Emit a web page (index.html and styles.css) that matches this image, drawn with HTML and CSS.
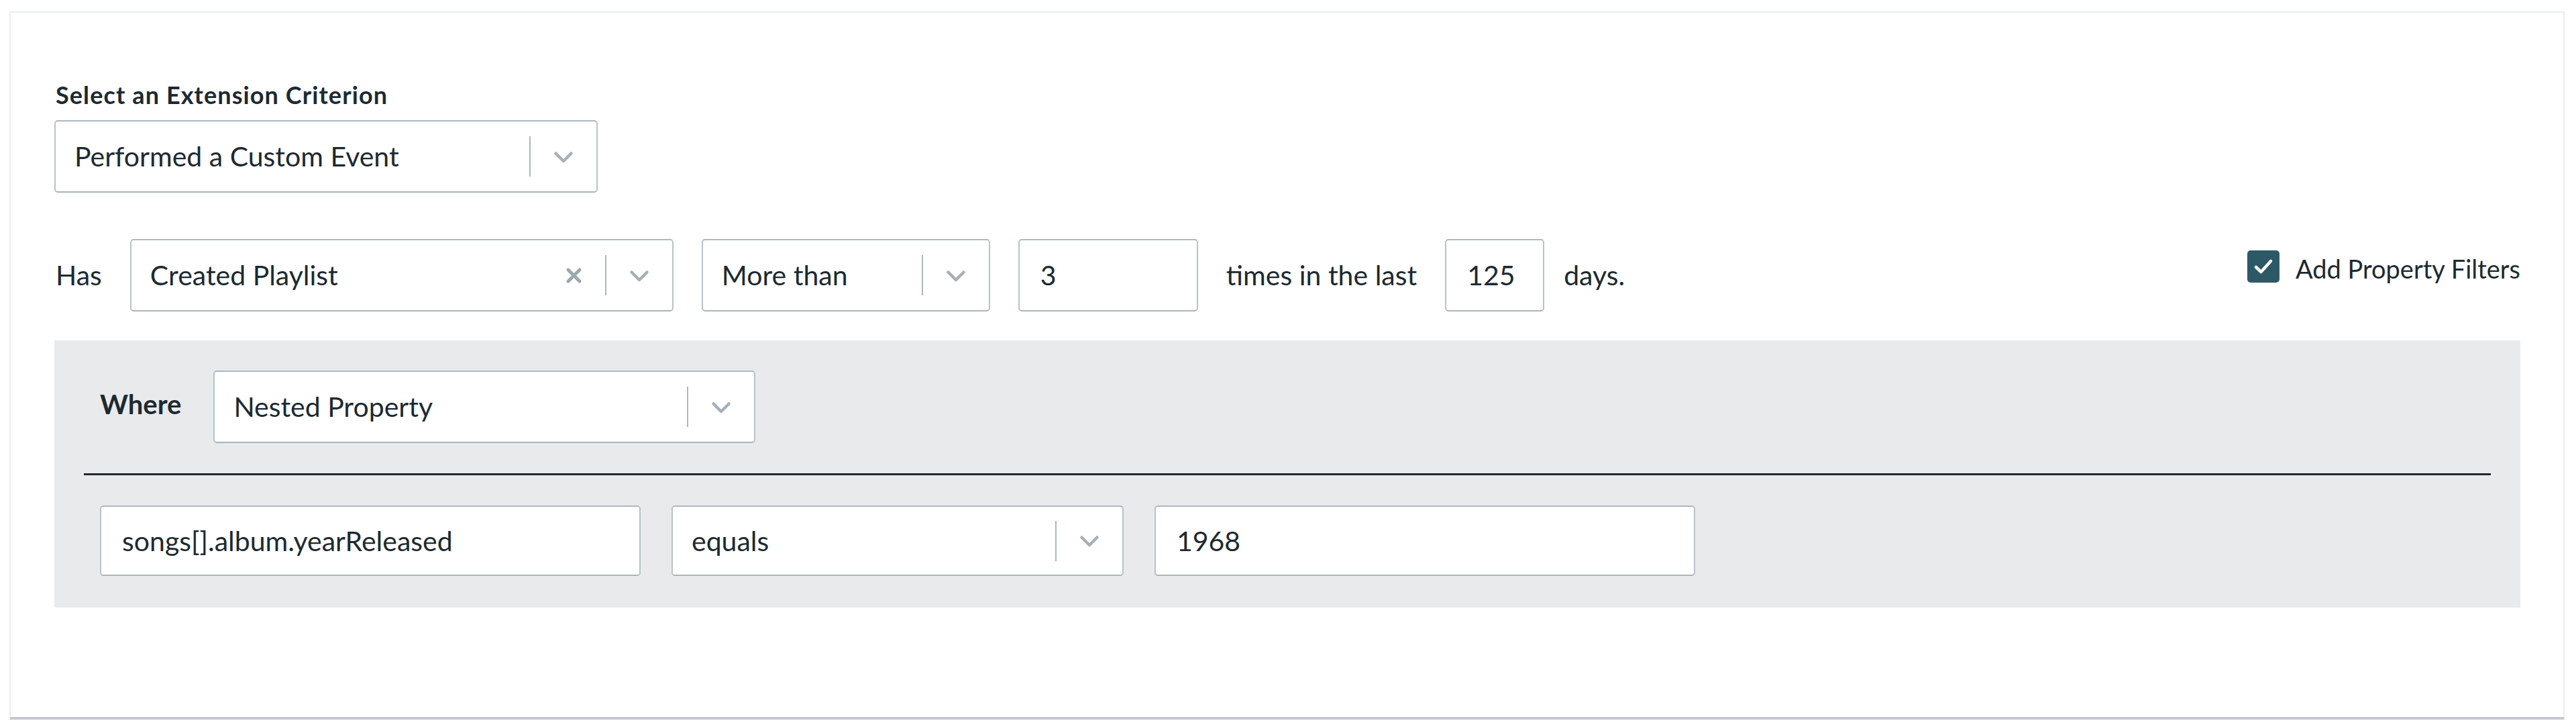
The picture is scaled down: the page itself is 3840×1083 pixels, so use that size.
FILE: index.html
```html
<!DOCTYPE html>
<html lang="en">
<head>
<meta charset="utf-8">
<title>Extension Criterion</title>
<link rel="stylesheet" href="styles.css">
</head>
<body>
<div class="card">
  <div class="field-label">Select an Extension Criterion</div>
  <div class="select w-criterion">
    <div class="select-value">Performed a Custom Event</div>
    <span class="sep"></span>
    <span class="chev"><svg width="30" height="19" viewBox="0 0 30 19"><path d="M3.5 3.5 L15 15 L26.5 3.5" fill="none" stroke="#a6b0b7" stroke-width="4.5" stroke-linecap="round" stroke-linejoin="round"/></svg></span>
  </div>

  <div class="row">
    <span class="txt">Has</span>
    <div class="select w-event">
      <div class="select-value">Created Playlist</div>
      <span class="clear"><svg width="25" height="25" viewBox="0 0 25 25"><path d="M4 4 L21 21 M21 4 L4 21" fill="none" stroke="#9ca7ae" stroke-width="5" stroke-linecap="round"/></svg></span>
      <span class="sep"></span>
      <span class="chev"><svg width="30" height="19" viewBox="0 0 30 19"><path d="M3.5 3.5 L15 15 L26.5 3.5" fill="none" stroke="#a6b0b7" stroke-width="4.5" stroke-linecap="round" stroke-linejoin="round"/></svg></span>
    </div>
    <div class="select w-compare">
      <div class="select-value">More than</div>
      <span class="sep"></span>
      <span class="chev"><svg width="30" height="19" viewBox="0 0 30 19"><path d="M3.5 3.5 L15 15 L26.5 3.5" fill="none" stroke="#a6b0b7" stroke-width="4.5" stroke-linecap="round" stroke-linejoin="round"/></svg></span>
    </div>
    <div class="input w-count">3</div>
    <span class="txt">times in the last</span>
    <div class="input w-days">125</div>
    <span class="txt days">days.</span>
    <label class="check">
      <span class="box"><svg width="30" height="26" viewBox="0 0 30 26"><path d="M4 14 L11.5 21 L26 5" fill="none" stroke="#ffffff" stroke-width="4.5" stroke-linecap="round" stroke-linejoin="round"/></svg></span>
      <span class="check-label">Add Property Filters</span>
    </label>
  </div>

  <div class="panel">
    <div class="where-row">
      <span class="where">Where</span>
      <div class="select w-nested">
        <div class="select-value">Nested Property</div>
        <span class="sep"></span>
        <span class="chev"><svg width="30" height="19" viewBox="0 0 30 19"><path d="M3.5 3.5 L15 15 L26.5 3.5" fill="none" stroke="#a6b0b7" stroke-width="4.5" stroke-linecap="round" stroke-linejoin="round"/></svg></span>
      </div>
    </div>
    <div class="rule"></div>
    <div class="filter-row">
      <div class="input w-path">songs[].album.yearReleased</div>
      <div class="select w-op">
        <div class="select-value">equals</div>
        <span class="sep"></span>
        <span class="chev"><svg width="30" height="19" viewBox="0 0 30 19"><path d="M3.5 3.5 L15 15 L26.5 3.5" fill="none" stroke="#a6b0b7" stroke-width="4.5" stroke-linecap="round" stroke-linejoin="round"/></svg></span>
      </div>
      <div class="input w-value">1968</div>
    </div>
  </div>
</div>
</body>
</html>
```

FILE: styles.css
```css
html, body {
  margin: 0;
  padding: 0;
  background: #ffffff;
}

body {
  font-family: Lato, "Liberation Sans", sans-serif;
  color: #1d2a30;
}

.card {
  margin: 17px 17px 0 14px;
  border: 2px solid #eaecee;
  border-bottom: 4px solid #c3c9ce;
  padding: 102px 64px 163px 65px;
  background: #ffffff;
}

.field-label {
  font-size: 36px;
  font-weight: 700;
  letter-spacing: 1.1px;
  line-height: 40px;
  margin-bottom: 18px;
  padding-left: 2px;
}

.select,
.input {
  box-sizing: border-box;
  height: 108px;
  border: 2px solid #b9c2c8;
  border-top-color: #aeb8bf;
  border-bottom-color: #aab4bb;
  border-radius: 5px;
  background: #ffffff;
  font-size: 41px;
  line-height: 48px;
  display: flex;
  align-items: center;
}

.select-value {
  flex: 1;
  padding-left: 28px;
  white-space: nowrap;
}

.input {
  padding-left: 31px;
}

.sep {
  width: 2px;
  height: 60px;
  background: #adb7be;
}

.chev {
  width: 98px;
  display: flex;
  justify-content: center;
  align-items: center;
  padding-top: 2px;
}

.clear {
  width: 92px;
  display: flex;
  justify-content: center;
  align-items: center;
}

.w-criterion { width: 810px; }
.w-event { width: 810px; }
.w-compare { width: 430px; }
.w-count { width: 268px; }
.w-days { width: 148px; }
.w-nested { width: 808px; }
.w-path { width: 806px; height: 105px; }
.w-op { width: 674px; height: 105px; }
.w-value { width: 806px; height: 105px; }

.row {
  margin-top: 69px;
  display: flex;
  align-items: center;
  gap: 42px;
  height: 108px;
}

.txt {
  font-size: 41px;
  line-height: 48px;
  white-space: nowrap;
}

.txt:first-child {
  padding-left: 2px;
}

.days {
  margin-left: -13px;
}

.check {
  margin-left: auto;
  align-self: flex-start;
  margin-top: 16px;
  display: flex;
  align-items: center;
  gap: 24px;
}

.box {
  width: 48px;
  height: 48px;
  border-radius: 5px;
  background: #2d5966;
  display: flex;
  align-items: center;
  justify-content: center;
}

.check-label {
  font-size: 38px;
  line-height: 44px;
  white-space: nowrap;
  padding-top: 6px;
}

.panel {
  margin-top: 43px;
  background: #e8eaec;
  padding: 45px 44px 47px 44px;
}

.where-row {
  display: flex;
  align-items: center;
  gap: 48px;
  padding-left: 24px;
  height: 108px;
}

.where {
  font-size: 40px;
  font-weight: 700;
  line-height: 48px;
  margin-top: -8px;
}

.rule {
  height: 3px;
  background: #1f2a30;
  margin: 45px 0;
}

.filter-row {
  display: flex;
  align-items: center;
  gap: 46px;
  padding-left: 24px;
}
```
